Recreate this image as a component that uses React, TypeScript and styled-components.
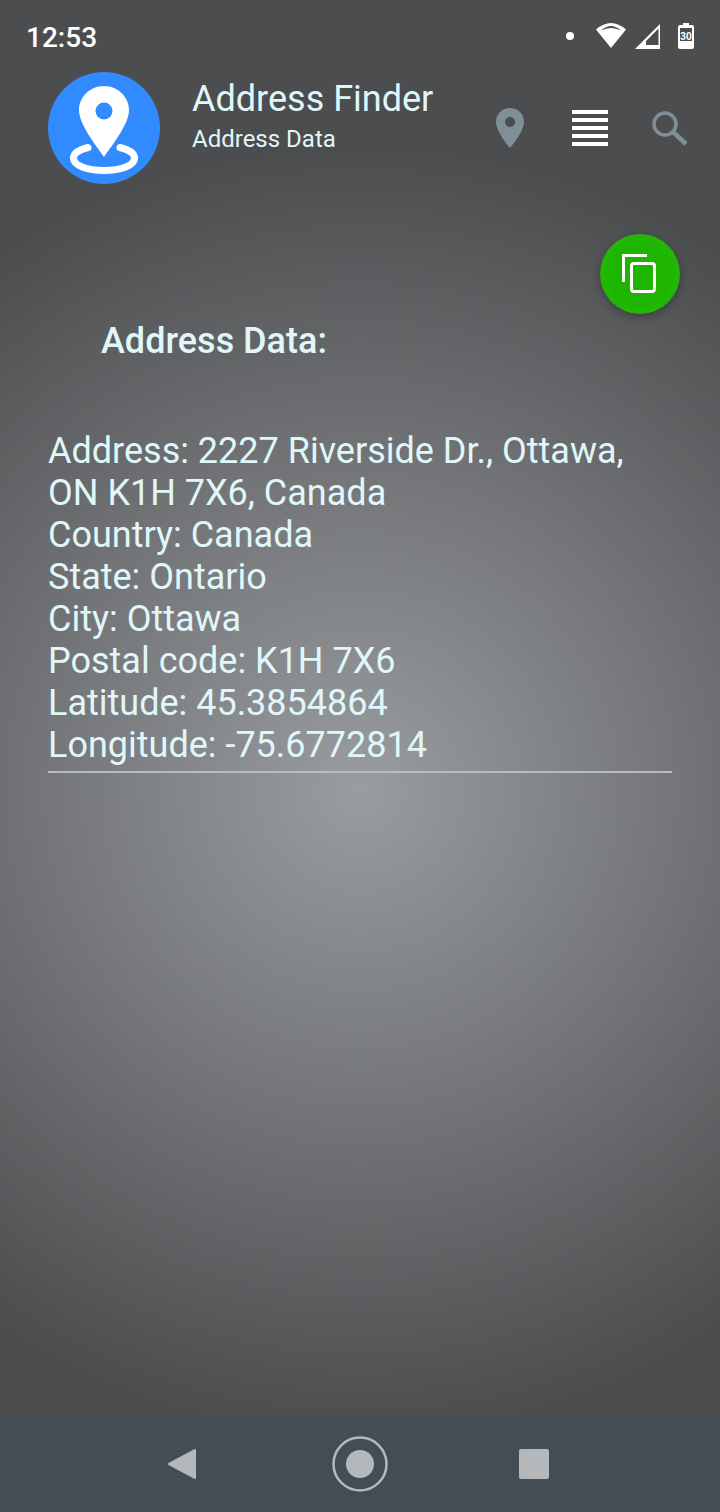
import React from "react";
import styled, { createGlobalStyle } from "styled-components";

const GlobalStyle = createGlobalStyle`
    html, body {
        margin: 0;
        padding: 0;
        background: #4c4d4f;
    }
    * {
        box-sizing: border-box;
    }
`;

const Screen = styled.div`
    width: 720px;
    height: 1512px;
    display: flex;
    flex-direction: column;
    overflow: hidden;
    font-family: Roboto, "Liberation Sans", sans-serif;
    background: radial-gradient(circle 640px at 360px 790px, #9a9da0 0%, #4c4d4f 100%);
`;

const StatusBar = styled.div`
    height: 72px;
    flex-shrink: 0;
    display: flex;
    align-items: center;
    padding: 2px 24px 0 26px;
    color: #fff;
`;

const Clock = styled.span`
    font-size: 28px;
    font-weight: 500;
    margin-right: auto;
`;

const StatusIcons = styled.div`
    display: flex;
    align-items: center;
    svg {
        display: block;
    }
`;

const Header = styled.header`
    height: 112px;
    flex-shrink: 0;
    display: flex;
    align-items: center;
    padding-left: 48px;
`;

const Logo = styled.div`
    width: 112px;
    height: 112px;
    border-radius: 50%;
    background: #328aff;
    flex-shrink: 0;
`;

const Titles = styled.div`
    width: 302px;
    margin-left: 32px;
    align-self: flex-start;
    margin-top: 6px;
    color: #e0f7fa;
`;

const Title = styled.div`
    font-size: 36px;
    line-height: 42px;
`;

const Subtitle = styled.div`
    font-size: 24px;
    line-height: 28px;
    margin-top: 5px;
`;

const Actions = styled.div`
    display: flex;
    align-items: center;
    svg {
        display: block;
    }
`;

const Content = styled.main`
    flex: 1;
    padding: 0 48px;
    display: flex;
    flex-direction: column;
`;

const FabRow = styled.div`
    display: flex;
    justify-content: flex-end;
    padding: 50px 0 0;
    margin-right: -8px;
`;

const Fab = styled.button`
    width: 80px;
    height: 80px;
    border: 0;
    padding: 0;
    border-radius: 50%;
    background: #1eb500;
    box-shadow: 0 3px 8px rgba(0, 0, 0, 0.3), inset 0 0 0 5px rgba(255, 255, 255, 0.025);
    display: flex;
    align-items: center;
    justify-content: center;
    svg {
        display: block;
    }
`;

const Heading = styled.h2`
    margin: 7px 0 0 53px;
    font-size: 36px;
    line-height: 40px;
    font-weight: 500;
    color: #e0f7fa;
`;

const DataBlock = styled.div`
    margin-top: 69px;
    width: 624px;
    padding-bottom: 5px;
    border-bottom: 2px solid #b9bcbf;
    color: #e0f7fa;
    font-size: 36px;
    line-height: 42px;
`;

const NavBar = styled.nav`
    height: 96px;
    flex-shrink: 0;
    background: #444c54;
    display: flex;
    align-items: center;
    justify-content: center;
    gap: 130px;
    padding-right: 4px;
    svg {
        display: block;
    }
`;

const LINES = [
    "Address: 2227 Riverside Dr., Ottawa,",
    "ON K1H 7X6, Canada",
    "Country: Canada",
    "State: Ontario",
    "City: Ottawa",
    "Postal code: K1H 7X6",
    "Latitude: 45.3854864",
    "Longitude: -75.6772814",
];

const App = () => {
    return (
        <Screen>
            <GlobalStyle />
            <StatusBar>
                <Clock>12:53</Clock>
                <StatusIcons>
                    <svg width="136" height="36" viewBox="560 19 136 36">
                        {/* notification dot */}
                        <circle cx="570" cy="36" r="4" fill="#fff" />
                        {/* wifi */}
                        <path d="M596 29.5 Q611 16.5 626 29.5 L611 48 Z M601 30.5 Q611 25.5 621 30.5 Q611 21.5 601 30.5 Z" fill="#fff" fillRule="evenodd" />
                        {/* signal */}
                        <path d="M635 49 L660 24 L660 49 Z M646 45 H658.5 V28.5 L646 41 Z" fill="#fff" fillRule="evenodd" />
                        {/* battery */}
                        <path d="M683 23 H689 V25 H692 Q694 25 694 27 V47 Q694 49 692 49 H680 Q678 49 678 47 V27 Q678 25 680 25 H683 Z" fill="#fff" />
                        <rect x="680" y="28" width="12" height="13" fill="#4c4d4f" />
                        <text x="686" y="40" fontSize="10" fontWeight="700" textAnchor="middle" fill="#fff" fontFamily="Roboto, sans-serif">30</text>
                    </svg>
                </StatusIcons>
            </StatusBar>
            <Header>
                <Logo>
                    <svg width="112" height="112" viewBox="0 0 112 112">
                        <path d="M56 14 C42 14 31 25 31 38 C31 52 47 72 56 85 C65 72 81 52 81 38 C81 25 70 14 56 14 Z" fill="#fff" />
                        <circle cx="56" cy="39" r="8.5" fill="#328aff" />
                        <path d="M40 75.5 C30 78 25.5 82 25.5 86 C25.5 94 40 98.5 56 98.5 C72 98.5 86.5 94 86.5 86 C86.5 82 82 78 72 75.5" fill="none" stroke="#fff" strokeWidth="7" strokeLinecap="round" />
                    </svg>
                </Logo>
                <Titles>
                    <Title>Address Finder</Title>
                    <Subtitle>Address Data</Subtitle>
                </Titles>
                <Actions>
                    <svg width="198" height="48" viewBox="0 0 198 48">
                        {/* pin */}
                        <path d="M16 4 C8 4 2 10 2 18 C2 28 16 44 16 44 C16 44 30 28 30 18 C30 10 24 4 16 4 Z M16 13 A5 5 0 1 1 16 23 A5 5 0 0 1 16 13 Z" fill="#7e8f95" fillRule="evenodd" />
                        {/* list */}
                        <path d="M78 6 H114 V10 H78 Z M78 14 H114 V18 H78 Z M78 22 H114 V26 H78 Z M78 30 H114 V34 H78 Z M78 38 H114 V42 H78 Z" fill="#fff" />
                        {/* search */}
                        <circle cx="171" cy="20" r="11" fill="none" stroke="#7e8f95" strokeWidth="3.5" />
                        <path d="M179 28 L192 40" stroke="#7e8f95" strokeWidth="4.5" />
                    </svg>
                </Actions>
            </Header>
            <Content>
                <FabRow>
                    <Fab aria-label="copy">
                        <svg width="36" height="40" viewBox="0 0 36 40">
                            <path d="M25 1.5 H1.5 V28" fill="none" stroke="#fff" strokeWidth="3" />
                            <rect x="9.5" y="9.5" width="23" height="28" rx="2.5" fill="none" stroke="#fff" strokeWidth="3" />
                        </svg>
                    </Fab>
                </FabRow>
                <Heading>Address Data:</Heading>
                <DataBlock>
                    {LINES.map((line) => (
                        <div key={line}>{line}</div>
                    ))}
                </DataBlock>
            </Content>
            <NavBar>
                <svg width="34" height="34" viewBox="0 0 34 34">
                    <path d="M28 3 V31 L2 17 Z" fill="#b4b8ba" stroke="#b4b8ba" strokeWidth="2" strokeLinejoin="round" />
                </svg>
                <svg width="58" height="58" viewBox="0 0 58 58">
                    <circle cx="29" cy="29" r="26.5" fill="none" stroke="#b4b8ba" strokeWidth="2.5" />
                    <circle cx="29" cy="29" r="14" fill="#b4b8ba" />
                </svg>
                <svg width="30" height="30" viewBox="0 0 30 30">
                    <rect width="30" height="30" rx="2" fill="#b4b8ba" />
                </svg>
            </NavBar>
        </Screen>
    );
};

export default App;
